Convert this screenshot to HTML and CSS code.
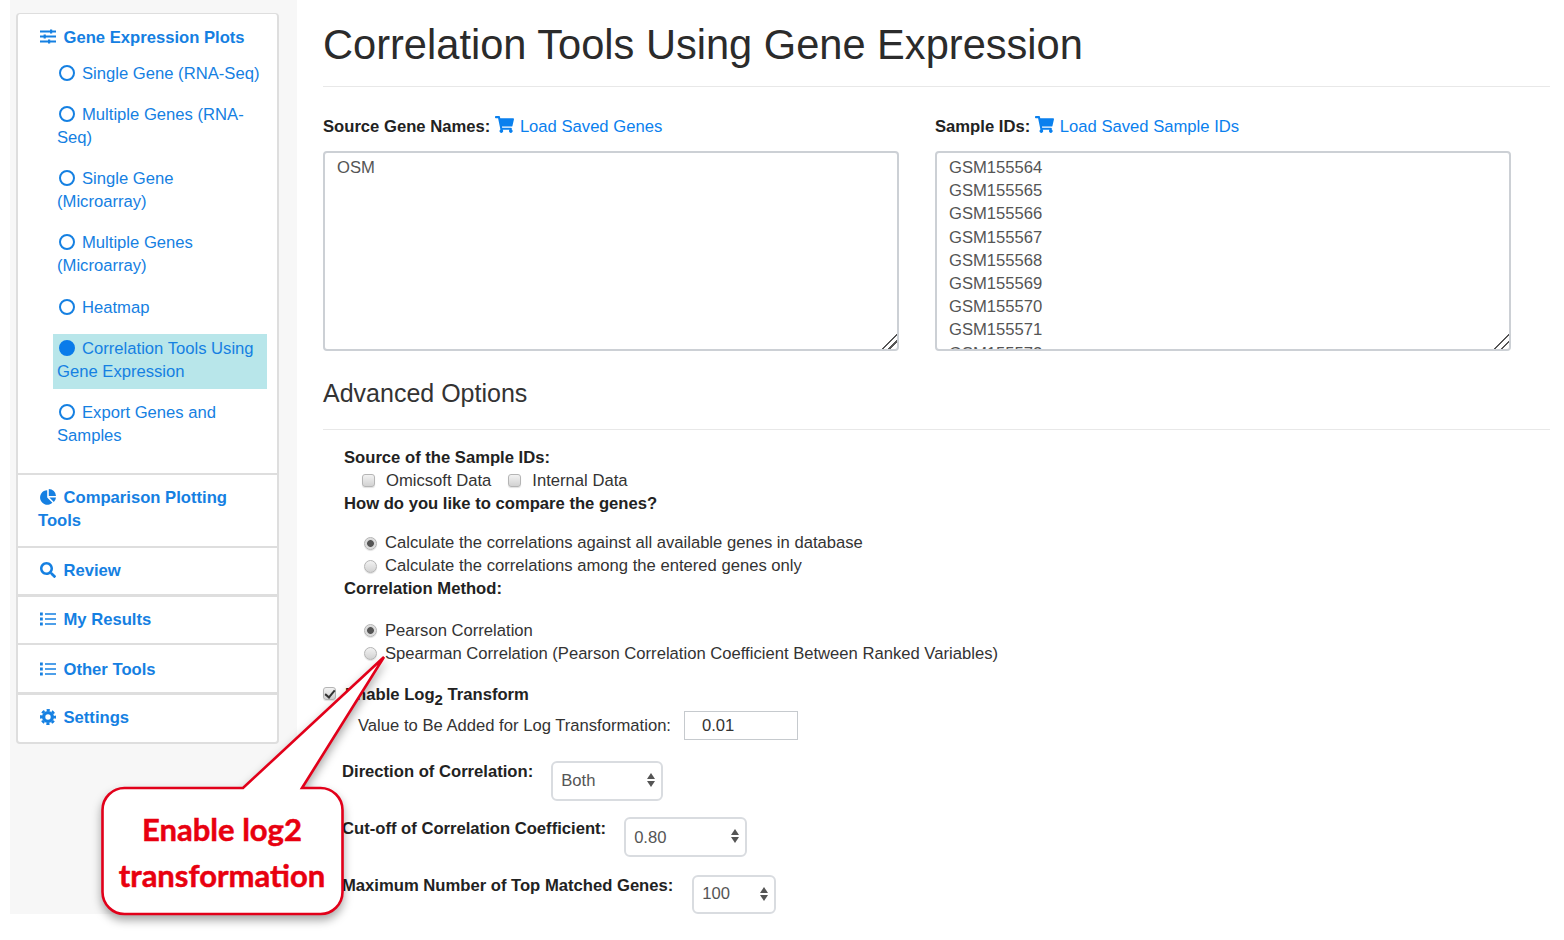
FILE: index.html
```html
<!doctype html>
<html>
<head>
    <meta charset="UTF-8">
    <link rel="stylesheet" href="styles.css">
</head>
<body>
    <div class="page">
        <nav class="sidebar">
            <div class="card">
                <div class="card-item first">
                    <a class="head" href="#"><svg class="ico" viewBox="0 0 16 16"><path d="M0 2.6h16M0 7.6h16M0 12.6h16" stroke="currentColor" stroke-width="2"/><path d="M10 .6h2.2v4H10zM3.6 5.6h2.2v4H3.6zM8 10.6h2.2v4H8z" fill="currentColor"/></svg>Gene Expression Plots</a>
                    <ul class="sublist">
                        <li><span class="dot"></span>Single Gene (RNA-Seq)</li>
                        <li><span class="dot"></span>Multiple Genes (RNA-Seq)</li>
                        <li><span class="dot"></span>Single Gene (Microarray)</li>
                        <li class="before-gap"><span class="dot"></span>Multiple Genes (Microarray)</li>
                        <li><span class="dot"></span>Heatmap</li>
                        <li class="active"><span class="dot"></span>Correlation Tools Using Gene Expression</li>
                        <li><span class="dot"></span>Export Genes and Samples</li>
                    </ul>
                </div>
                <div class="card-item tall">
                    <a class="head" href="#"><svg class="ico" viewBox="0 0 16 16"><path d="M7.2 1.2v7.4l5.2 5.2A7.3 7.3 0 1 1 7.2 1.2z M8.8 0a7.2 7.2 0 0 1 7.2 7H8.8z M9.4 8.6H16a7.2 7.2 0 0 1-2.2 4.4z" fill="currentColor"/></svg>Comparison Plotting Tools</a>
                </div>
                <div class="card-item review">
                    <a class="head" href="#"><svg class="ico" viewBox="0 0 512 512"><path fill="currentColor" d="M505 442.7L405.3 343c-4.5-4.5-10.6-7-17-7H372c27.6-35.3 44-79.7 44-128C416 93.1 322.9 0 208 0S0 93.1 0 208s93.1 208 208 208c48.3 0 92.7-16.4 128-44v16.3c0 6.4 2.5 12.5 7 17l99.7 99.7c9.4 9.4 24.6 9.4 33.9 0l28.3-28.3c9.4-9.4 9.4-24.6.1-34zM208 336c-70.7 0-128-57.2-128-128 0-70.7 57.2-128 128-128 70.7 0 128 57.2 128 128 0 70.7-57.2 128-128 128z"/></svg>Review</a>
                </div>
                <div class="card-item results">
                    <a class="head" href="#"><svg class="ico" viewBox="0 0 16 16"><path d="M5 3h11M5 8h11M5 13h11" stroke="currentColor" stroke-width="1.6"/><path d="M0 1.6h2.8v2.8H0zM0 6.6h2.8v2.8H0zM0 11.6h2.8v2.8H0z" fill="currentColor"/></svg>My Results</a>
                </div>
                <div class="card-item other">
                    <a class="head" href="#"><svg class="ico" viewBox="0 0 16 16"><path d="M5 3h11M5 8h11M5 13h11" stroke="currentColor" stroke-width="1.6"/><path d="M0 1.6h2.8v2.8H0zM0 6.6h2.8v2.8H0zM0 11.6h2.8v2.8H0z" fill="currentColor"/></svg>Other Tools</a>
                </div>
                <div class="card-item last">
                    <a class="head" href="#"><svg class="ico" viewBox="0 0 16 16"><circle cx="8" cy="8" r="4.4" fill="none" stroke="currentColor" stroke-width="3.4"/><circle cx="8" cy="8" r="6.9" fill="none" stroke="currentColor" stroke-width="2.2" stroke-dasharray="3.2 2.22" stroke-dashoffset="1.6"/></svg>Settings</a>
                </div>
            </div>
        </nav>

        <main class="main">
            <h1>Correlation Tools Using Gene Expression</h1>

            <div class="columns">
                <div class="col">
                    <div class="field-label"><b>Source Gene Names:</b>
                        <a href="#"><svg class="cart" viewBox="0 0 576 512"><path fill="currentColor" d="M528.12 301.319l47.273-208C578.806 78.301 567.391 64 551.99 64H159.208l-9.166-44.81C147.758 8.021 137.93 0 126.529 0H24C10.745 0 0 10.745 0 24v16c0 13.255 10.745 24 24 24h69.883l70.248 343.435C147.325 417.1 136 435.222 136 456c0 30.928 25.072 56 56 56s56-25.072 56-56c0-15.674-6.447-29.835-16.824-40h209.647C430.447 426.165 424 440.326 424 456c0 30.928 25.072 56 56 56s56-25.072 56-56c0-22.172-12.888-41.332-31.579-50.405l5.517-24.276c3.413-15.018-8.002-29.319-23.403-29.319H218.117l-6.545-32h293.145c11.206 0 20.92-7.754 23.403-18.681z"/></svg>Load Saved Genes</a>
                    </div>
                    <textarea>OSM</textarea>
                </div>
                <div class="col">
                    <div class="field-label"><b>Sample IDs:</b>
                        <a href="#"><svg class="cart" viewBox="0 0 576 512"><path fill="currentColor" d="M528.12 301.319l47.273-208C578.806 78.301 567.391 64 551.99 64H159.208l-9.166-44.81C147.758 8.021 137.93 0 126.529 0H24C10.745 0 0 10.745 0 24v16c0 13.255 10.745 24 24 24h69.883l70.248 343.435C147.325 417.1 136 435.222 136 456c0 30.928 25.072 56 56 56s56-25.072 56-56c0-15.674-6.447-29.835-16.824-40h209.647C430.447 426.165 424 440.326 424 456c0 30.928 25.072 56 56 56s56-25.072 56-56c0-22.172-12.888-41.332-31.579-50.405l5.517-24.276c3.413-15.018-8.002-29.319-23.403-29.319H218.117l-6.545-32h293.145c11.206 0 20.92-7.754 23.403-18.681z"/></svg>Load Saved Sample IDs</a>
                    </div>
                    <textarea>GSM155564
GSM155565
GSM155566
GSM155567
GSM155568
GSM155569
GSM155570
GSM155571
GSM155572
GSM155573</textarea>
                </div>
            </div>

            <h2>Advanced Options</h2>

            <form class="options">
                <div class="opt-label">Source of the Sample IDs:</div>
                <div class="opt-row checks">
                    <label><input type="checkbox">Omicsoft Data</label>
                    <label><input type="checkbox">Internal Data</label>
                </div>
                <div class="opt-label">How do you like to compare the genes?</div>
                <div class="radios first-group">
                    <label class="opt-row"><input type="radio" name="compare" checked>Calculate the correlations against all available genes in database</label>
                    <label class="opt-row"><input type="radio" name="compare">Calculate the correlations among the entered genes only</label>
                </div>
                <div class="opt-label">Correlation Method:</div>
                <div class="radios second-group">
                    <label class="opt-row"><input type="radio" name="method" checked>Pearson Correlation</label>
                    <label class="opt-row"><input type="radio" name="method">Spearman Correlation (Pearson Correlation Coefficient Between Ranked Variables)</label>
                </div>
                <label class="log-row"><input type="checkbox" checked><span>Enable Log<sub>2</sub> Transform</span></label>
                <div class="value-row">Value to Be Added for Log Transformation:<input class="value-input" type="text" value="0.01"></div>
                <div class="sel-row dir-row"><b>Direction of Correlation:</b><div class="sel sel-dir"><select><option>Both</option></select></div></div>
                <div class="sel-row cut-row"><b>Cut-off of Correlation Coefficient:</b><div class="sel sel-cut"><select><option>0.80</option></select></div></div>
                <div class="sel-row max-row"><b>Maximum Number of Top Matched Genes:</b><div class="sel sel-max"><select><option>100</option></select></div></div>
            </form>
        </main>
    </div>

    <div class="callout">
        <svg class="callout-shape" width="300" height="280" viewBox="0 0 300 280"><path d="M30 138H148L289 7L207 138H225A22 22 0 0 1 247.5 160V242A22 22 0 0 1 225 264H30A22 22 0 0 1 7.5 242V160A22 22 0 0 1 30 138Z" fill="#fff" stroke="#e2001a" stroke-width="2.6" stroke-linejoin="miter"/></svg>
        <div class="callout-text">Enable log2<br>transformation</div>
    </div>
</body>
</html>
```

FILE: styles.css
```css
* {
    box-sizing: border-box;
}
body {
    margin: 0;
    background-color: #fff;
    font-family: "Liberation Sans", Arial, sans-serif;
    font-size: 16.64px;
    line-height: 23px;
    color: #333;
}
a {
    text-decoration: none;
    color: #0a80ee;
}

.page {
    display: flex;
    padding-left: 10px;
}

/* left menu */
.sidebar {
    width: 287px;
    height: 914px;
    padding: 13px 18px 0 6px;
    background-color: #f7f7f7;
}
.card {
    border: 2px solid #dedede;
    border-top-width: 1px;
    border-radius: 4px;
    background-color: #fff;
}
.card-item {
    padding-left: 20px;
    padding-right: 20px;
    border-bottom: 2px solid #dedede;
}
.card-item.first {
    height: 461px;
    padding: 12px 10px 0 20px;
}
.card-item.tall {
    height: 73px;
    padding-top: 11px;
}
.card-item.review {
    height: 49px;
    padding-top: 11px;
    border-bottom-width: 3px;
}
.card-item.results {
    height: 48px;
    padding-top: 10.5px;
}
.card-item.other {
    height: 50px;
    padding-top: 12.5px;
    border-bottom-width: 3px;
}
.card-item.last {
    height: 47px;
    padding-top: 10.5px;
    border-bottom: 0;
}
.head {
    font-weight: bold;
    color: #1580e2;
}
.ico {
    width: 16px;
    height: 16px;
    margin: 0 7.5px 0 2px;
    vertical-align: -2px;
}
.sublist {
    list-style: none;
    margin: 13px 0 0 15px;
    padding: 0;
    color: #1580e2;
}
.sublist li {
    padding: 0 4px;
    margin-bottom: 18px;
    width: 214px;
}
.sublist li.before-gap {
    margin-bottom: 19px;
}
.sublist li.active {
    background-color: #b8e6ea;
    padding: 3px 4px 6px;
    margin-top: -3px;
    margin-bottom: 12px;
}
.dot {
    display: inline-block;
    width: 16px;
    height: 16px;
    margin: 0 7px 0 2px;
    border: 2px solid #1580e2;
    border-radius: 50%;
    vertical-align: -2px;
}
.active .dot {
    background-color: #0a7bea;
    border-color: #0a7bea;
}

/* main content */
.main {
    width: 1227px;
    margin-left: 26px;
}
h1 {
    height: 87px;
    margin: 0;
    padding-top: 20px;
    border-bottom: 1px solid #e8e8e8;
    font-size: 41.6px;
    line-height: 50px;
    font-weight: normal;
    color: #2b2b2b;
}
.columns {
    display: flex;
    gap: 36px;
    margin-top: 27.5px;
}
.col {
    width: 576px;
}
.field-label {
    height: 23px;
    margin-bottom: 13px;
}
.field-label b {
    color: #222;
    margin-right: 0.5px;
}
.cart {
    width: 19px;
    height: 17px;
    margin-right: 5.5px;
    vertical-align: -1px;
}
textarea {
    display: block;
    width: 576px;
    height: 200.5px;
    padding: 3.5px 12px 0;
    border: 2px solid #ccd0d5;
    border-radius: 4px;
    overflow: hidden;
    resize: both;
    outline: none;
    font-family: "Liberation Sans", Arial, sans-serif;
    font-size: 16.64px;
    line-height: 23.2px;
    color: #555;
}
textarea::-webkit-resizer {
    background: linear-gradient(135deg, transparent 48%, #555 48%, #555 55%, transparent 55%, transparent 70%, #555 70%, #555 77%, transparent 77%);
}
h2 {
    height: 52px;
    margin: 27px 0 0;
    border-bottom: 1px solid #e8e8e8;
    font-size: 25px;
    line-height: 30px;
    font-weight: normal;
    color: #333;
}
.options {
    padding-top: 15.5px;
    padding-left: 21px;
}
.opt-label {
    font-weight: bold;
    color: #222;
}
.opt-row {
    display: block;
    height: 23px;
    padding-left: 18px;
    color: #333;
}
.checks {
    display: flex;
    gap: 17px;
}
.checks input {
    margin-right: 10px;
}
.radios.first-group {
    margin-top: 16px;
}
.radios.second-group {
    margin-top: 19px;
}
.radios .opt-row {
    padding-left: 20px;
}
input[type=checkbox], input[type=radio] {
    appearance: none;
    -webkit-appearance: none;
    position: relative;
    width: 13px;
    height: 13px;
    margin: 0 11px 0 0;
    vertical-align: -1px;
    border: 1px solid #b5b5b5;
    background: linear-gradient(#f2f2f2, #d2d2d2);
    box-shadow: 0 1px 1px rgba(0,0,0,0.12);
}
input[type=checkbox] {
    border-radius: 3px;
}
input[type=radio] {
    border-radius: 50%;
    vertical-align: -2px;
    margin-right: 8px;
}
.second-group input[type=radio] {
    vertical-align: -1px;
}
input[type=radio]:checked {
    background: radial-gradient(circle, #555 0, #555 3px, #d8d8d8 3.8px, #eee 100%);
}
input[type=checkbox]:checked::after {
    content: "";
    position: absolute;
    left: 3px;
    top: 0;
    width: 4px;
    height: 8px;
    border: solid #333;
    border-width: 0 2px 2px 0;
    transform: rotate(40deg);
}
.log-row {
    display: block;
    height: 23px;
    margin: 18px 0 0 -21px;
    font-weight: bold;
    color: #222;
}
.log-row input {
    margin-right: 9px;
    vertical-align: 0;
}
sub {
    font-size: 15px;
    line-height: 0;
    vertical-align: -5px;
}
.value-row {
    display: flex;
    align-items: center;
    height: 29px;
    margin: 5.5px 0 0 14px;
}
.value-input {
    width: 114px;
    height: 29px;
    margin-left: 13px;
    padding: 0 17px;
    border: 1px solid #c6cace;
    outline: none;
    font-family: "Liberation Sans", Arial, sans-serif;
    font-size: 16.64px;
    color: #333;
}
.sel-row {
    display: flex;
    align-items: flex-start;
    margin-left: -2px;
    line-height: 23px;
    color: #222;
}
.sel-row b {
    margin-top: -1.5px;
}
.dir-row {
    margin-top: 21px;
}
.cut-row {
    margin-top: 16px;
}
.cut-row b {
    margin-top: 0;
}
.max-row {
    margin-top: 18px;
}
.sel {
    position: relative;
    height: 40px;
}
.sel-dir {
    width: 112px;
    margin-left: 18px;
}
.sel-cut {
    width: 123px;
    margin-left: 18px;
}
.sel-max {
    width: 84px;
    height: 39px;
    margin-left: 19px;
}
.sel select {
    appearance: none;
    -webkit-appearance: none;
    width: 100%;
    height: 100%;
    padding: 0 0 2px 8px;
    border: 2px solid #d9dce0;
    border-radius: 6px;
    background: #fff;
    font-family: "Liberation Sans", Arial, sans-serif;
    font-size: 16.64px;
    color: #555;
}
.sel-cut select {
    padding-bottom: 0;
}
.sel-max select {
    padding-bottom: 3px;
}
.sel::before, .sel::after {
    content: "";
    position: absolute;
    right: 8px;
    border-left: 4px solid transparent;
    border-right: 4px solid transparent;
}
.sel::before {
    top: 12px;
    border-bottom: 6px solid #555;
}
.sel::after {
    top: 20px;
    border-top: 6px solid #555;
}

/* red note over the page */
.callout {
    position: absolute;
    left: 95px;
    top: 650px;
    width: 300px;
    height: 280px;
}
.callout-shape {
    display: block;
    filter: drop-shadow(0 5px 5px rgba(0,0,0,0.35));
}
.callout-text {
    position: absolute;
    left: 7px;
    top: 156px;
    width: 240px;
    text-align: center;
    font-family: Lato, "Open Sans", sans-serif;
    font-weight: bold;
    font-size: 31px;
    line-height: 46px;
    color: #e8000f;
    -webkit-text-stroke: 0.5px #e8000f;
}
```
